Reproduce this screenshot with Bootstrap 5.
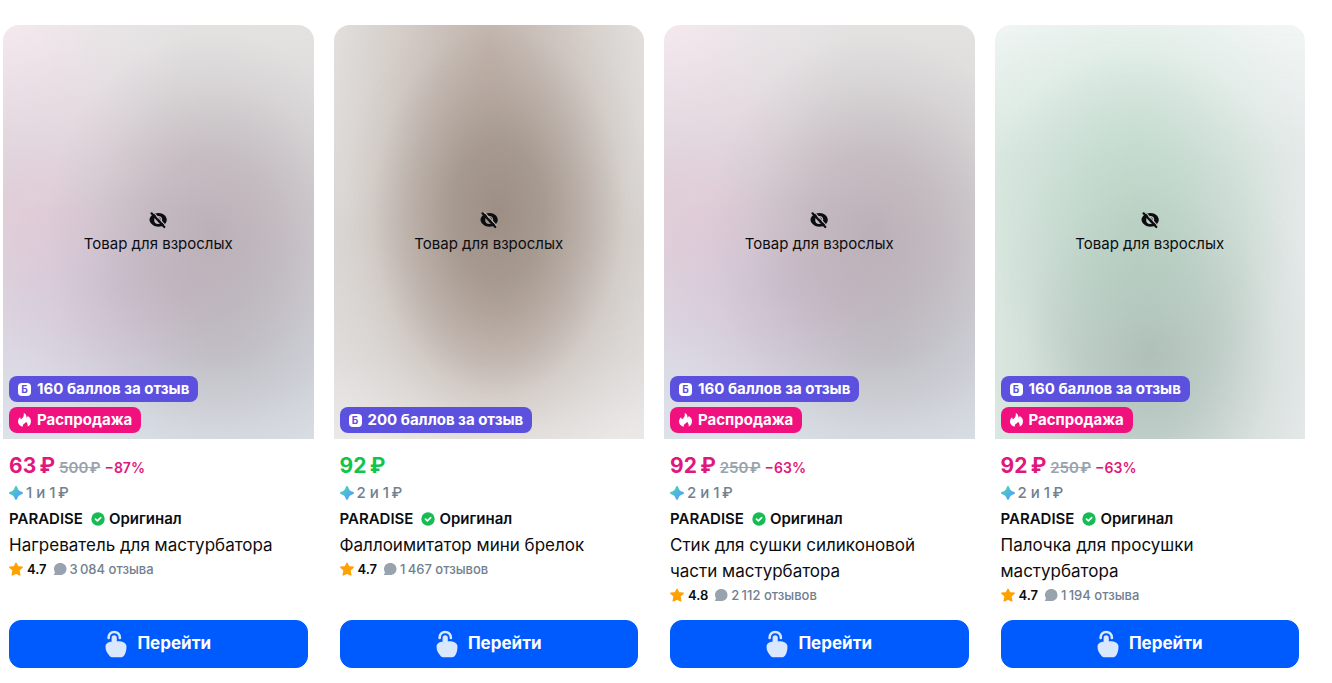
<!DOCTYPE html>
<html lang="ru">
<head>
<meta charset="utf-8">
<meta name="viewport" content="width=device-width, initial-scale=1">
<title>Каталог товаров</title>
<link href="https://cdn.jsdelivr.net/npm/bootstrap@5.3.0/dist/css/bootstrap.min.css" rel="stylesheet">
<style>
  body { font-family: Inter, "Noto Sans", sans-serif; color: #0b0d10; background: #fff; }
  .catalog { padding: 25px 27px 16px 3px; overflow: hidden; }
  .catalog > .row { --bs-gutter-x: 20px; --bs-gutter-y: 24px; }
  .cover { aspect-ratio: 3 / 4; border-radius: 16px 16px 0 0; color: #0b0d10; }
  .cover-note { font-size: 15px; line-height: 20px; }
  .cover-note svg { width: 20px; height: 20px; }
  .cover-labels { left: 6px; bottom: 6px; gap: 5px; }
  .cover-rose { background:
    radial-gradient(ellipse 54% 48% at 68% 50%, rgba(178,163,172,.7), rgba(182,169,177,.55) 40%, rgba(188,180,186,.2) 75%, rgba(190,185,190,0)),
    radial-gradient(ellipse 45% 28% at 38% 64%, rgba(203,181,207,.5), rgba(203,181,207,0)),
    radial-gradient(ellipse 68% 48% at 10% 46%, rgba(230,202,218,.7), rgba(230,208,222,.35) 50%, rgba(230,208,222,0)),
    radial-gradient(ellipse 60% 34% at 72% 78%, rgba(186,188,192,.65), rgba(195,197,202,0)),
    radial-gradient(ellipse 60% 40% at 0% 0%, #f5e9ef, rgba(240,232,237,.5) 50%, rgba(243,232,238,0)),
    linear-gradient(to bottom, #e3e2e1, #d5d3d4 45%, #d8dae4 78%, #dde2e9); }
  .cover-brown { background:
    radial-gradient(ellipse 50% 54% at 53% 45%, rgba(146,131,120,.8), rgba(150,136,125,.68) 30%, rgba(165,150,141,.4) 60%, rgba(185,173,166,.13) 82%, rgba(200,190,184,0)),
    radial-gradient(ellipse 50% 90% at 50% 5%, rgba(181,164,153,.7), rgba(187,173,163,.45) 45%, rgba(200,190,184,0)),
    radial-gradient(ellipse 56% 46% at 52% 68%, rgba(190,173,164,.6), rgba(198,185,178,.35) 50%, rgba(205,195,189,0)),
    linear-gradient(to bottom, #e2dfdd, #d9d5d2 50%, #e0dedc 80%, #ebe9e8); }
  .cover-green { background:
    radial-gradient(ellipse 52% 42% at 46% 48%, rgba(175,204,186,.6), rgba(182,209,193,.35) 55%, rgba(195,218,205,0)),
    radial-gradient(ellipse 54% 52% at 50% 78%, rgba(162,178,172,.8), rgba(169,187,180,.58) 40%, rgba(185,200,194,.2) 75%, rgba(190,205,199,0)),
    radial-gradient(ellipse 56% 46% at 44% 28%, rgba(207,229,217,.7), rgba(212,232,222,.4) 50%, rgba(215,233,224,0)),
    linear-gradient(to bottom, rgba(243,247,246,.9), rgba(240,244,243,0) 32%),
    linear-gradient(to right, #dbe8e1, #dbe4e0 50%, #e4e8e8); }
  .tag-label { height: 26px; padding: 0 9px; gap: 6px; border-radius: 8px; color: #fff; font-size: 15px; line-height: 26px; font-weight: 700; }
  .tag-label svg { width: 13px; height: 14px; }
  .tag-points { background: #5b51de; }
  .tag-sale { background: #f1117e; }
  .points-mark { width: 13px; height: 13px; border-radius: 4px; background: #fff; color: #5b51de; font-size: 10px; line-height: 13px; }
  .details { padding: 14px 6px 0; }
  .price-line { gap: 4px; height: 27px; line-height: 25px; }
  .price { font-size: 21px; font-weight: 700; color: #10c44c; }
  .on-sale .price, .discount { color: #e0187c; }
  .old-price { font-size: 15px; font-weight: 600; color: #99a3ae; }
  .discount { font-size: 14px; font-weight: 600; }
  .bonus { gap: 3px; font-size: 15px; line-height: 26px; font-weight: 500; color: #70808f; }
  .brand { gap: 4px; font-size: 15px; line-height: 26px; font-weight: 600; color: #0b0d10; }
  .brand svg { margin-left: 4px; }
  .product-name { padding-right: 16px; font-size: 17px; line-height: 26px; font-weight: 400; color: #0b0d10; }
  .rating { gap: 4px; font-size: 13px; line-height: 22px; font-weight: 600; }
  .reviews { gap: 3px; margin-left: 2px; font-weight: 500; color: #70808f; }
  .small-icon { width: 14px; height: 14px; flex: none; }
  .go-btn { --bs-btn-bg: #005bff; --bs-btn-border-color: #005bff; --bs-btn-color: #fff; --bs-btn-hover-bg: #0050e0; --bs-btn-hover-color: #fff;
    height: 48px; padding: 0; gap: 10px; border-radius: 12px; font-size: 17px; font-weight: 700; color: #fff; }
  .go-btn svg { width: 22px; height: 28px; }
  .button-wrap { padding: 14px 6px 0; }
</style>
</head>
<body>
<svg class="d-none" aria-hidden="true">
  <symbol id="i-hidden" viewBox="0 0 20 20"><path fill="currentColor" fill-rule="evenodd" d="M10.500 3c4.600 0 8.300 3.300 8.300 6.800s-3.700 7-8.300 7-9-3.500-9-7S5.900 3 10.500 3Zm-.3 3a4 4 0 1 0 0 8 4 4 0 0 0 0-8Zm.3 1.200a3 3 0 0 1 2.600 2.800c0 1.500-1.100 2.600-2.500 2.600Z"/><path d="M5.400 2.200 17.800 15.800" stroke="#bdb3b5" stroke-width="1.200"/><path d="M3.500 3.300 16.300 17" stroke="currentColor" stroke-width="2.200" stroke-linecap="round"/></symbol>
  <symbol id="i-fire" viewBox="0 0 14 15"><path fill="currentColor" d="M6.200 0c2.200.8 3 2.600 3 5 .8-.3 1.200-1 1.300-1.800C12.600 4.300 14 6.300 14 8.900c0 2.900-1.500 4.900-3.700 5.700.7-2.200-.4-3.700-1.700-5.300-.3 1-.9 1.500-1.700 1.900-1.200.6-2 1.700-1.700 3.600C1.800 14 0 12 0 9.200c0-2.100 1-3.700 2.300-4.700.1 1 .4 1.600 1 2.100C5.500 5.300 6.700 3 6.200 0Z"/></symbol>
  <symbol id="i-spark" viewBox="0 0 14 14"><path fill="url(#spark-fill)" d="M7 0c.6 0 .8.600 1.200 1.200C9.100 3.900 10.100 4.900 12.800 5.800c.6.300 1.200.6 1.200 1.200s-.6.9-1.200 1.200C10.100 9.100 9.100 10.100 8.200 12.800c-.4.600-.6 1.200-1.200 1.200s-.8-.6-1.200-1.200C4.900 10.100 3.900 9.100 1.200 8.200.6 7.900 0 7.600 0 7s.6-.9 1.200-1.200C3.900 4.900 4.900 3.900 5.800 1.200 6.200.6 6.400 0 7 0Z"/></symbol>
  <symbol id="i-check" viewBox="0 0 14 14"><circle cx="7" cy="7" r="6.700" fill="#16bb54"/><path d="m4.500 7.100 1.900 1.800 3.300-3.300" fill="none" stroke="#fff" stroke-width="1.700" stroke-linecap="round" stroke-linejoin="round"/></symbol>
  <symbol id="i-star" viewBox="0 0 14 14"><path fill="#ffa101" stroke="#ffa101" stroke-width="1.400" stroke-linejoin="round" d="m7 1.300 1.700 3.500 4.500.5-3.300 2.900.9 4.700L7 11.200l-3.800 1.700.9-4.700L.8 5.300l4.500-.5Z"/></symbol>
  <symbol id="i-comment" viewBox="0 0 14 14"><path fill="#99a3ae" d="M7.300 1C11 1 13.500 3.600 13.500 7S11 13 7.300 13H1.800C.9 13 .8 12.400 1.200 11.900c.6-.7.900-1.100.7-1.700C1.300 9.200 1 8.200 1 7c0-3.400 2.600-6 6.300-6Z"/></symbol>
  <symbol id="i-tap" viewBox="0 0 22 28"><path d="M3.600 8C3.300 4.200 6 2 9.200 2s6 2.200 5.700 6" fill="none" stroke="#d9e7ff" stroke-width="2.600" stroke-linecap="round"/><path fill="#d9e7ff" d="M9.200 5.200c1.600 0 2.600 1.100 2.600 2.600v3.600c4.600-.4 9.700 1 9.700 5.400 0 4.500-1.300 7.400-2.500 8.900-.7.900-1.700 1.500-3 1.500H8.100c-1.600 0-2.900-.5-3.700-1.500C2.300 23.300.5 20.500.5 16.700c0-2.900 2.400-4.900 6.100-5V7.800c0-1.500 1-2.600 2.600-2.600Z"/></symbol>
</svg>
<svg width="0" height="0" class="position-absolute" aria-hidden="true"><defs><linearGradient id="spark-fill" x1="0" y1="0" x2="1" y2="1"><stop offset=".2" stop-color="#48d1b5"/><stop offset=".65" stop-color="#50aaf2"/></linearGradient></defs></svg>

<main class="container-fluid catalog">
  <div class="row row-cols-4" id="products"></div>
</main>

<script src="https://cdn.jsdelivr.net/npm/bootstrap@5.3.0/dist/js/bootstrap.bundle.min.js"></script>
<script>
  const products = [
    { cover: 'rose', points: 160, price: '63', old: '500', off: '87', bonus: '1 и 1', name: 'Нагреватель для мастурбатора', rate: '4.7', reviews: '3\u2009084 отзыва' },
    { cover: 'brown', points: 200, price: '92', bonus: '2 и 1', name: 'Фаллоимитатор мини брелок', rate: '4.7', reviews: '1\u2009467 отзывов' },
    { cover: 'rose', points: 160, price: '92', old: '250', off: '63', bonus: '2 и 1', name: 'Стик для сушки силиконовой части мастурбатора', rate: '4.8', reviews: '2\u2009112 отзывов' },
    { cover: 'green', points: 160, price: '92', old: '250', off: '63', bonus: '2 и 1', name: 'Палочка для просушки мастурбатора', rate: '4.7', reviews: '1\u2009194 отзыва' }
  ];
  const icon = (name, cls = '') => `<svg class="${cls}" aria-hidden="true"><use href="#i-${name}"/></svg>`;
  document.getElementById('products').innerHTML = products.map(p => `
    <div class="col">
      <article class="d-flex flex-column h-100 ${p.off ? 'on-sale' : ''}">
        <a href="#" class="cover cover-${p.cover} position-relative d-flex flex-column align-items-center justify-content-center text-decoration-none">
          <span class="cover-note d-flex flex-column align-items-center gap-1">${icon('hidden')}<span>Товар для взрослых</span></span>
          <span class="cover-labels position-absolute d-flex flex-column align-items-start">
            <span class="tag-label tag-points d-flex align-items-center"><span class="points-mark text-center">Б</span>${p.points} баллов за отзыв</span>
            ${p.off ? `<span class="tag-label tag-sale d-flex align-items-center">${icon('fire')}Распродажа</span>` : ''}
          </span>
        </a>
        <div class="details">
          <div class="price-line d-flex align-items-baseline"><span class="price">${p.price}\u2009₽</span>${p.off ? `<s class="old-price">${p.old}\u200A₽</s><span class="discount">−${p.off}%</span>` : ''}</div>
          <div class="bonus d-flex align-items-center">${icon('spark', 'small-icon')}<span>${p.bonus}\u2009₽</span></div>
          <div class="brand d-flex align-items-center"><span>PARADISE</span>${icon('check', 'small-icon')}<span>Оригинал</span></div>
          <h2 class="product-name mb-0">${p.name}</h2>
          <div class="rating d-flex align-items-center">${icon('star', 'small-icon')}<span>${p.rate}</span><span class="reviews d-flex align-items-center">${icon('comment', 'small-icon')}<span>${p.reviews}</span></span></div>
        </div>
        <div class="button-wrap mt-auto"><button type="button" class="btn go-btn w-100 d-flex align-items-center justify-content-center">${icon('tap')}<span>Перейти</span></button></div>
      </article>
    </div>`).join('');
</script>
</body>
</html>
